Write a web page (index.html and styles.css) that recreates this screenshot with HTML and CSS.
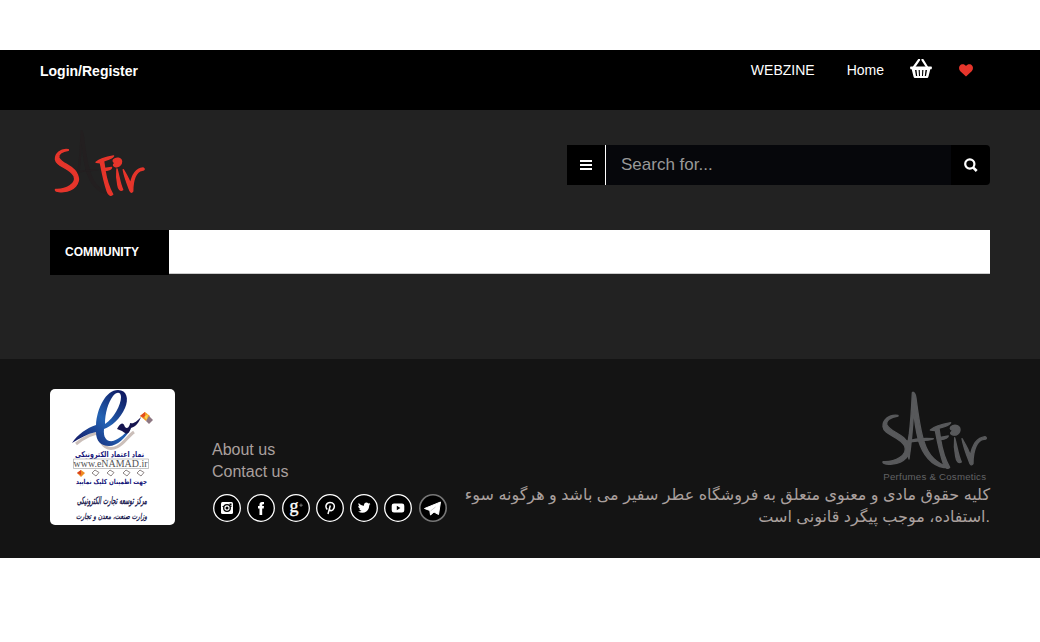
FILE: index.html
```html
<!DOCTYPE html>
<html lang="en">
<head>
<meta charset="utf-8">
<title>Safir</title>
<link rel="stylesheet" href="styles.css">
</head>
<body>
<svg class="defs" aria-hidden="true">
  <defs>
    <g id="letter-a">
      <path d="M127 23C131 19 136 26 138 39C145 92 151 142 164 175C175 210 202 235 235 247L222 248C184 242 158 207 146 168C139 140 133 110 131 72C129 110 127 155 117 222C108 202 113 177 118 146C123 106 125 64 127 23Z"/>
      <path d="M108 169C130 162 160 158 190 161C184 167 166 164 108 172Z"/>
    </g>
    <g id="letters-sfir">
      <path d="M84 91C56 87 38 106 39 125C42 151 88 153 104 183C115 211 75 232 39 230C37 237 51 239 67 237C103 234 126 209 117 182C107 147 61 142 51 120C46 107 62 96 84 93Z"/>
      <path d="M181 135C194 123 218 117 242 113C238 122 221 126 207 130L211 157L235 153C234 159 225 163 212 164C217 195 226 224 239 247C233 254 224 248 220 236C210 208 202 169 196 137Z"/>
      <path d="M242 126C252 117 268 120 270 132C271 145 258 154 246 149C239 146 241 139 253 136C244 137 238 132 242 126Z"/>
      <path d="M254 158C261 182 264 210 274 231C266 236 259 229 257 214C253 195 252 176 254 158Z"/>
      <path d="M276 161C286 178 297 194 301 213C306 183 320 158 345 155C351 157 351 163 342 163C321 165 309 195 309 236C305 243 300 239 297 228C289 208 280 184 276 161Z"/>
    </g>
  </defs>
</svg>

<header class="topbar">
  <a class="login">Login/Register</a>
  <nav class="topnav">
    <a class="webzine">WEBZINE</a>
    <a class="home">Home</a>
    <svg class="basket" viewBox="0 0 24 20" fill="#fff">
      <path d="M5 8L10 .8M18 8L13.500 .8" stroke="#fff" stroke-width="2.200" stroke-linecap="round"/>
      <path fill-rule="evenodd" d="M1.500 7.500H22.500Q23.500 8.500 22.500 10.300H21.300L19.500 17.500Q19.200 19 18 19H6Q4.800 19 4.500 17.500L2.700 10.300H1.500Q.5 8.500 1.500 7.500ZM6 11L7 17H8.200L7.500 11ZM9.600 11L10 17H11L10.800 11ZM13.200 11L13 17H14L14.400 11ZM16.500 11L15.800 17H17L18 11Z"/>
    </svg>
    <svg class="heart" viewBox="0 0 14 13"><path fill="#e6352b" d="M7 12.600L1.300 7.200C-.2 5.600-.4 3.200.8 1.700C2.400-.2 5.400-.1 7 2C8.600-.1 11.600-.2 13.200 1.700C14.400 3.200 14.200 5.600 12.700 7.200Z"/></svg>
  </nav>
</header>

<main class="main">
  <div class="brandrow">
    <svg class="logo" viewBox="0 0 390 270">
      <g transform="translate(13 11) scale(.858)">
        <use href="#letter-a" fill="#231f20"/>
        <use href="#letters-sfir" fill="#e6352b" stroke="#e6352b" stroke-width="5" stroke-linejoin="round"/>
      </g>
    </svg>
    <form class="search">
      <button class="menu" type="button" aria-label="Categories">
        <svg width="12" height="10" viewBox="0 0 12 10"><path fill="#fff" d="M0 0H12V2H0ZM0 4H12V6H0ZM0 8H12V10H0Z"/></svg>
      </button>
      <input class="field" type="text" placeholder="Search for...">
      <button class="go" type="button" aria-label="Search">
        <svg width="14" height="14" viewBox="0 0 14 14" fill="none" stroke="#fff" stroke-width="2.200"><circle cx="5.800" cy="6" r="4.600"/><path d="M9 9.300L12.700 13" stroke-width="2.600"/></svg>
      </button>
    </form>
  </div>
  <nav class="menubar"><a class="community">COMMUNITY</a><span class="strip"></span></nav>
</main>

<footer class="footer">
  <svg class="enamad" viewBox="0 0 125 136">
    <defs>
      <linearGradient id="ink" x1="0" y1="1" x2="1" y2="0">
        <stop offset="0" stop-color="#10105c"/><stop offset=".5" stop-color="#2463b4"/><stop offset="1" stop-color="#09094f"/>
      </linearGradient>
    </defs>
    <path d="M26 55C36 47 44 44 50 44M50 47C51 57 58 62 67 58C74 55 78 47 84 43" fill="none" stroke="#cbbfba" stroke-width="3"/>
    <path fill="url(#ink)" fill-rule="evenodd" d="M22 54C28 45 37 39 46 36C47 19 56 1 68 1C77 1 79 10 75 19C70 30 62 37 54 40C53 49 57 53 63 52C70 50 75 44 81 39C76 49 67 57 59 57C51 57 46 52 46 43C37 45 30 49 22 54ZM55 35C64 29 71 16 71 8C71 3 67 2 63 7C58 14 55 24 55 35Z"/>
    <path fill="#15154f" d="M67 40C70 34 73 32 75 38C78 41 80 36 80 34C84 35 86 33 91 28C88 36 84 38 81 39C78 47 76 45 72 42Z"/>
    <path fill="#f39a22" d="M90 27L95 23L100 27L96 32Z"/><path fill="#e34c20" d="M90 27L95 23L95 29Z"/><path fill="#fbd44d" d="M94 28L98 25L97 31Z"/><path fill="#8d7782" d="M96 32L99 27L103 31L99 35Z"/>
    <text class="seal-text" direction="rtl" x="94" y="67.500" textLength="69" lengthAdjust="spacingAndGlyphs">نماد اعتماد الکترونیکی</text>
    <path d="M23.500 70H98.500V79.500H23.500Z" fill="none" stroke="#aaa" stroke-width=".7"/>
    <text class="seal-url" x="23.500" y="78" textLength="74" lengthAdjust="spacingAndGlyphs">www.eNAMAD.ir</text>
    <path fill="#ee8b23" d="M27 84L31 81L35 84L31 88Z"/>
    <path fill="#d94120" d="M27 84L31 81L31 86Z"/>
    <g fill="#fff" stroke="#8d8585" stroke-width="1"><path id="gem" d="M42 84L45 81L49 83.500L46 87Z"/><use href="#gem" x="15"/><use href="#gem" x="31"/><use href="#gem" x="45"/></g>
    <text class="seal-text small" direction="rtl" x="97" y="94.500" textLength="71" lengthAdjust="spacingAndGlyphs">جهت اطمینان کلیک نمایید</text>
    <text class="seal-script" direction="rtl" transform="translate(97 115) scale(1 1.700)" textLength="70" lengthAdjust="spacingAndGlyphs">مرکز توسعه تجارت الکترونیکی</text>
    <text class="seal-script" direction="rtl" transform="translate(97 130) scale(1 1.350)" textLength="71" lengthAdjust="spacingAndGlyphs">وزارت صنعت، معدن و تجارت</text>
  </svg>

  <div class="links">
    <a>About us</a>
    <a>Contact us</a>
    <div class="social">
      <svg viewBox="0 0 30 30"><circle class="ring" cx="15" cy="15" r="13.300"/><rect x="9" y="9" width="12" height="12" rx="1.500" fill="#fff"/><path d="M17.500 10.500H19.500V12.500H17.500ZM10.500 13H12V14H10.500ZM18 13H19.500V14H18Z"/><circle cx="15" cy="15" r="3.300" fill="#fff" stroke="#000" stroke-width="1.300"/><circle cx="15" cy="15" r="1.500"/></svg>
      <svg viewBox="0 0 30 30"><circle class="ring" cx="15" cy="15" r="13.300"/><path fill="#fff" d="M13.500 22V15.500H12V13H13.500V11.500Q13.500 9 16 9H18V11.300H17Q16.200 11.300 16.200 12V13H18L17.700 15.500H16.200V22Z"/></svg>
      <svg viewBox="0 0 30 30"><circle class="ring" cx="15" cy="15" r="13.300"/><text class="gplus" x="8.500" y="18.500" textLength="9" lengthAdjust="spacingAndGlyphs">g</text><path d="M20 10.500V14M18.300 12.200H21.800" stroke="#999" stroke-width=".7"/></svg>
      <svg viewBox="0 0 30 30"><circle class="ring" cx="15" cy="15" r="13.300"/><path fill="none" stroke="#fff" stroke-width="1.500" d="M12.300 16.500C9.500 13.500 11.500 9.500 15 9.500C18.500 9.500 20 12 19 15C18 17.800 15.500 18.500 14.300 16.500M15.300 12.500L13 21"/></svg>
      <svg viewBox="0 0 30 30"><circle class="ring" cx="15" cy="15" r="13.300"/><path fill="#fff" d="M9 18.500C10.500 18.700 11.700 18.300 12.600 17.600C11.300 17.400 10.500 16.700 10.200 15.700H11.300C10 15.200 9.300 14.200 9.300 12.900L10.500 13.200C9.300 12.200 9.200 10.900 9.800 9.900C11.200 11.600 12.900 12.500 15 12.700C14.700 8.900 18.200 8.900 19.400 10.500L21.200 9.900L20.200 11.400L21.500 11.200L20.200 12.600C20.100 19.500 13.500 21.400 9 18.500Z"/></svg>
      <svg viewBox="0 0 30 30"><circle class="ring" cx="15" cy="15" r="13.300"/><path fill="#fff" fill-rule="evenodd" d="M11 10.500H19Q21.300 10.500 21.300 12.800V17.200Q21.300 19.500 19 19.500H11Q8.700 19.500 8.700 17.200V12.800Q8.700 10.500 11 10.500ZM13.800 12.800V17.200L17.400 15Z"/></svg>
      <svg viewBox="0 0 30 30"><circle class="ring dim" cx="15" cy="15" r="13.200"/><path fill="#fff" stroke="#fff" stroke-linejoin="round" d="M6.500 15.500L22.500 9L20.500 21.500L16 19L12.500 22L11.800 17.500Z"/><path d="M12.500 18L17.500 14" stroke="#aaa" stroke-width=".6"/></svg>
    </div>
  </div>

  <div class="rights">
    <svg class="footlogo" viewBox="0 0 390 300">
      <g fill="#58595b" stroke="#58595b" stroke-width="4" stroke-linejoin="round"><use href="#letter-a"/><use href="#letters-sfir"/></g>
      <text class="tagline" x="40" y="286" textLength="308">Perfumes &amp; Cosmetics</text>
    </svg>
    <p class="copyright">کلیه حقوق مادی و معنوی متعلق به فروشگاه عطر سفیر می باشد و هرگونه سوء استفاده، موجب پیگرد قانونی است.</p>
  </div>
</footer>
</body>
</html>
```
FILE: styles.css
```css
* { box-sizing: border-box; }
body {
  margin: 0;
  padding-top: 50px;
  background: #fff;
  font-family: "Liberation Sans", "DejaVu Sans", sans-serif;
}
.defs { display: none; }
.topbar {
  display: flex;
  justify-content: space-between;
  height: 60px;
  padding: 0 67px 0 40px;
  background: #000;
  color: #fff;
  font-size: 14px;
  line-height: 20px;
}
.login { padding-top: 11px; font-weight: bold; }
.topnav { display: flex; align-items: flex-start; padding-top: 10px; }
.webzine { margin-right: 32px; }
.home { margin-right: 25px; }
.basket { width: 24px; height: 20px; margin: -1px 26px 0 0; }
.heart { width: 14px; height: 13px; margin-top: 4px; }
.main { height: 249px; padding: 10px 50px 0; background: #222; }
.brandrow { display: flex; justify-content: space-between; height: 110px; }
.logo { width: 130px; height: 90px; margin-left: -10px; }
.search { display: flex; width: 423px; height: 40px; margin-top: 25px; }
.menu, .go {
  display: flex;
  align-items: center;
  justify-content: center;
  flex: none;
  width: 39px;
  padding: 0;
  border: 0;
  background: #000;
}
.menu { border-right: 1px solid #fff; }
.go { border-radius: 0 4px 4px 0; }
.field {
  flex: 1;
  min-width: 0;
  padding: 0 15px;
  border: 0;
  background: #06070b;
  color: #999;
  font: 17px "Liberation Sans", sans-serif;
}
.field::placeholder { color: #999; }
.menubar { display: flex; height: 45px; }
.community {
  width: 119px;
  padding-left: 15px;
  background: #000;
  color: #fff;
  font-size: 12px;
  font-weight: bold;
  line-height: 45px;
}
.strip { flex: 1; height: 44px; background: #fff; border-bottom: 1px solid #ccc; }
.footer {
  display: flex;
  height: 199px;
  padding: 30px 50px 0;
  background: #141414;
  color: #aaa09e;
  font-size: 16px;
  line-height: 22px;
}
.enamad { flex: none; width: 125px; height: 136px; border-radius: 5px; background: #fff; overflow: visible; }
.seal-text { font: bold 8px "DejaVu Sans", sans-serif; fill: #15157a; }
.seal-text.small { font-size: 7px; }
.seal-url { font: 11px "Liberation Serif", serif; fill: #555; }
.seal-script { font: italic bold 6px "DejaVu Sans", sans-serif; fill: #20204f; }
.links { display: flex; flex-direction: column; width: 236px; margin: 50px 0 0 37px; }
.social { display: flex; gap: 4.300px; margin-top: 10px; }
.social svg { width: 30px; height: 30px; flex: none; }
.ring { fill: #000; stroke: #fff; stroke-width: 1.300; }
.ring.dim { stroke: #777; stroke-width: 1.600; }
.gplus { font: 19px "Liberation Serif", serif; fill: #fff; stroke: #fff; stroke-width: .4; }
.rights { display: flex; flex-direction: column; align-items: flex-end; flex: 1; margin-top: -4px; }
.footlogo { width: 130px; height: 100px; margin-right: -10px; flex: none; }
.tagline { font: 29px "Liberation Sans", sans-serif; fill: #626365; }
.copyright { width: 530px; margin: -1px 0 0; text-align: right; }
```
